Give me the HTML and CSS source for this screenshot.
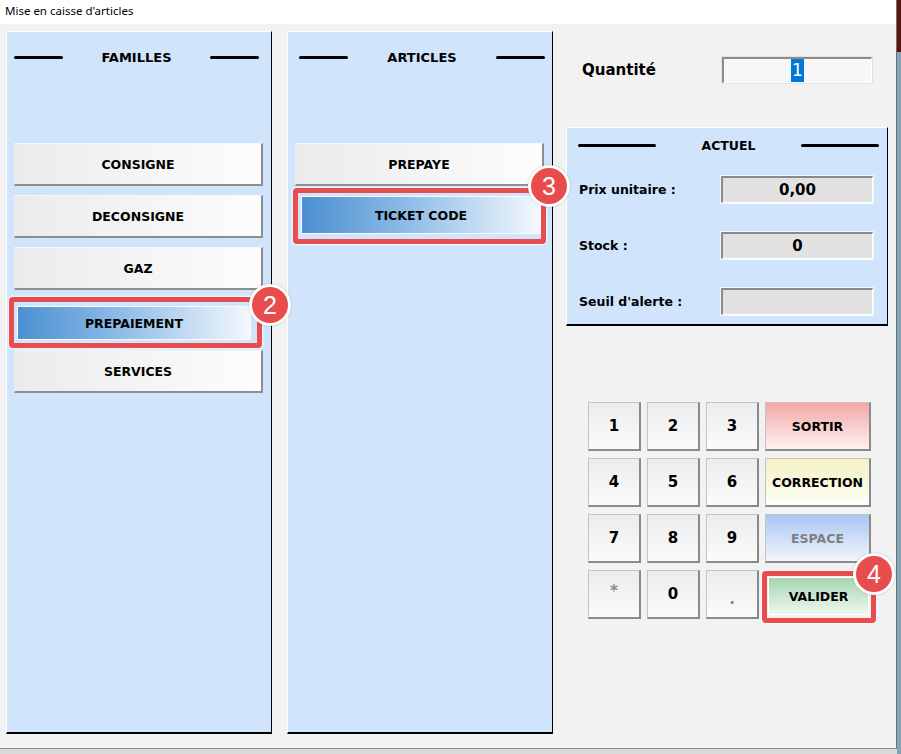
FILE: index.html
```html
<!DOCTYPE html>
<html lang="fr">
<head>
    <meta charset="UTF-8">
    <meta name="viewport" content="width=device-width, initial-scale=1.0">
    <title>Mise en caisse d'articles</title>
    <link rel="stylesheet" href="styles.css">
</head>
<body>
    <div class="window">
        <div class="titlebar">Mise en caisse d'articles</div>
        <div class="content">
            <div class="panel">
                <div class="panel-head">
                    <span class="rule"></span>
                    <span class="panel-title">FAMILLES</span>
                    <span class="rule"></span>
                </div>
                <div class="list">
                    <div class="btn">CONSIGNE</div>
                    <div class="btn">DECONSIGNE</div>
                    <div class="btn">GAZ</div>
                    <div class="highlight highlight-famille">
                        <div class="btn-selected">PREPAIEMENT</div>
                        <span class="badge badge-2">2</span>
                    </div>
                    <div class="btn">SERVICES</div>
                </div>
            </div>

            <div class="panel panel-articles">
                <div class="panel-head">
                    <span class="rule"></span>
                    <span class="panel-title">ARTICLES</span>
                    <span class="rule"></span>
                </div>
                <div class="list">
                    <div class="btn">PREPAYE</div>
                    <div class="highlight highlight-article">
                        <div class="btn-selected">TICKET CODE</div>
                        <span class="badge badge-3">3</span>
                    </div>
                </div>
            </div>

            <div class="side">
                <div class="qty-row">
                    <label class="qty-label">Quantité</label>
                    <div class="qty-input"><span class="selected-text">1</span></div>
                </div>

                <div class="actuel">
                    <div class="panel-head">
                        <span class="rule rule-long"></span>
                        <span class="panel-title">ACTUEL</span>
                        <span class="rule rule-long"></span>
                    </div>
                    <div class="fields">
                        <div class="field-row">
                            <span class="field-label">Prix unitaire :</span>
                            <div class="field">0,00</div>
                        </div>
                        <div class="field-row">
                            <span class="field-label">Stock :</span>
                            <div class="field">0</div>
                        </div>
                        <div class="field-row">
                            <span class="field-label">Seuil d'alerte :</span>
                            <div class="field"></div>
                        </div>
                    </div>
                </div>

                <div class="keypad">
                    <div class="key">1</div>
                    <div class="key">2</div>
                    <div class="key">3</div>
                    <div class="key key-wide key-sortir">SORTIR</div>
                    <div class="key">4</div>
                    <div class="key">5</div>
                    <div class="key">6</div>
                    <div class="key key-wide key-correction">CORRECTION</div>
                    <div class="key">7</div>
                    <div class="key">8</div>
                    <div class="key">9</div>
                    <div class="key key-wide key-espace">ESPACE</div>
                    <div class="key key-dim key-star">*</div>
                    <div class="key">0</div>
                    <div class="key key-dim key-dot">.</div>
                    <div class="highlight highlight-valider">
                        <div class="key key-wide key-valider">VALIDER</div>
                        <span class="badge badge-4">4</span>
                    </div>
                </div>
            </div>
        </div>
    </div>
</body>
</html>
```

FILE: styles.css
```css
body {
    margin: 0;
    width: 901px;
    height: 754px;
    overflow: hidden;
    font-family: "DejaVu Sans", Verdana, sans-serif;
    color: #000;
    background:
        linear-gradient(#5a1313, #5a1313) right top / 4px 52px no-repeat,
        linear-gradient(#88a3b8, #88a3b8) right top / 4px 100% no-repeat,
        #d9d9d9;
}
.window {
    width: 896px;
    height: 748px;
    background: #f2f2f2;
    border-right: 1px solid #6f6f6f;
    border-bottom: 1px solid #8a8a8a;
}
.titlebar {
    height: 24px;
    background: #fff;
    padding-left: 5px;
    font-family: "Noto Sans", sans-serif;
    font-size: 11.5px;
    line-height: 22px;
}
.content {
    display: flex;
    padding: 7px 0 0 6px;
}

/* colonnes familles / articles */
.panel {
    width: 266px;
    height: 703px;
    box-sizing: border-box;
    background: #d0e5fb;
    border-top: 1px solid #fff;
    border-left: 1px solid #fff;
    border-right: 1px solid #000;
    border-bottom: 2px solid #000;
    margin-right: 15px;
}
.panel-articles {
    margin-right: 13px;
}
.panel-head {
    display: flex;
    align-items: center;
    justify-content: space-between;
    height: 51px;
    padding: 0 12px 0 7px;
}
.panel-articles .panel-head {
    padding: 0 7px 0 11px;
}
.rule {
    width: 49px;
    height: 3px;
    border-radius: 2px;
    background: #000;
}
.rule-long {
    width: 78px;
}
.panel-title {
    font-weight: bold;
    font-size: 13px;
}
.list {
    display: flex;
    flex-direction: column;
    gap: 9px;
    margin-top: 60px;
    padding: 0 8px 0 7px;
}
.btn {
    height: 43px;
    box-sizing: border-box;
    display: flex;
    align-items: center;
    justify-content: center;
    font-weight: bold;
    font-size: 12.5px;
    background: linear-gradient(to right, #ebebeb, #fdfdfd);
    border-style: solid;
    border-width: 1px 2px 2px 1px;
    border-color: #f6f6f6 #8e8e8e #8e8e8e #ececec;
}
.btn-selected {
    height: 100%;
    display: flex;
    align-items: center;
    justify-content: center;
    font-weight: bold;
    font-size: 12.5px;
    background: linear-gradient(to right, #4b8fd1, #8fbde7 45%, #f4f8fd);
    box-shadow: 0 0 0 1px rgba(255, 255, 255, 0.85);
}

/* encadrés rouges + pastilles */
.highlight {
    position: relative;
    box-sizing: border-box;
    border: 5px solid #e84c4c;
    border-radius: 4px;
    box-shadow: 0 0 2px 1px rgba(255, 255, 255, 0.9);
}
.highlight-famille {
    height: 51px;
    margin: -2px 1px -7px -5px;
    padding: 5px 7px 4px 4px;
}
.highlight-article {
    height: 56px;
    margin: -7px -2px 0 -2px;
    padding: 4px 1px 6px 4px;
}
.highlight-valider {
    margin: 1px -5px -4px -3px;
    padding: 2px 3px 4px 2px;
}
.badge {
    position: absolute;
    z-index: 5;
    width: 36px;
    height: 36px;
    border: 3px solid #fff;
    border-radius: 50%;
    background: #e84c4c;
    color: #fff;
    font-family: "Liberation Sans", Arial, sans-serif;
    font-size: 25px;
    line-height: 36px;
    text-align: center;
    box-shadow: 0 0 2px rgba(0, 0, 0, 0.25);
}
.badge-2 {
    right: -34px;
    top: -18px;
}
.badge-3 {
    right: -29px;
    top: -28px;
}
.badge-4 {
    right: -24px;
    top: -23px;
}

/* partie droite */
.side {
    width: 322px;
    display: flex;
    flex-direction: column;
}
.qty-row {
    display: flex;
    align-items: center;
    margin-top: 26px;
    padding-left: 16px;
}
.qty-label {
    width: 140px;
    font-weight: bold;
    font-size: 15px;
}
.qty-input {
    width: 150px;
    height: 26px;
    box-sizing: border-box;
    display: flex;
    align-items: center;
    justify-content: center;
    background: #f7f7f7;
    border-style: solid;
    border-width: 2px 1px 1px 2px;
    border-color: #8c8c8c #fff #fff #8c8c8c;
    box-shadow: 0 0 0 1px #e2e2e2;
}
.selected-text {
    background: #0078d7;
    color: #fff;
    font-size: 17px;
    line-height: 23px;
    padding: 0 1px;
}
.actuel {
    margin-top: 44px;
    height: 199px;
    box-sizing: border-box;
    background: #d0e5fb;
    border-top: 1px solid #fff;
    border-left: 1px solid #fff;
    border-right: 1px solid #000;
    border-bottom: 2px solid #000;
}
.actuel .panel-head {
    height: 35px;
    padding: 0 8px 0 11px;
}
.actuel .panel-title {
    font-size: 12.5px;
}
.fields {
    display: flex;
    flex-direction: column;
    gap: 29px;
    margin-top: 13px;
    padding: 0 14px 0 12px;
}
.field-row {
    display: flex;
    align-items: center;
    justify-content: space-between;
}
.field-label {
    font-weight: bold;
    font-size: 12.5px;
}
.field {
    width: 152px;
    height: 27px;
    box-sizing: border-box;
    display: flex;
    align-items: center;
    justify-content: center;
    background: #e2e2e2;
    border-style: solid;
    border-width: 2px 1px 1px 2px;
    border-color: #8a8a8a #fff #fff #8a8a8a;
    box-shadow: 0 0 0 1px #f4f7fb;
    font-weight: bold;
    font-size: 15px;
}

/* pavé numérique */
.keypad {
    display: grid;
    grid-template-columns: 53px 53px 53px 106px;
    grid-auto-rows: 49px;
    gap: 7px 6px;
    margin: 76px 0 0 22px;
}
.key {
    box-sizing: border-box;
    display: flex;
    align-items: center;
    justify-content: center;
    font-weight: bold;
    font-size: 15px;
    background: linear-gradient(#ececec, #fbfbfb);
    border-style: solid;
    border-width: 1px 2px 2px 1px;
    border-color: #c4c4c4 #8a8a8a #8a8a8a #c4c4c4;
}
.key-wide {
    font-size: 12.5px;
}
.key-sortir {
    background: linear-gradient(#f3a7a7, #fdf1f1);
}
.key-correction {
    background: linear-gradient(#f4f1c4, #fefef6);
}
.key-espace {
    background: linear-gradient(#a9c5f1, #f2f6fd);
    color: #7f7f7f;
}
.key-dim {
    color: #8a8a8a;
}
.key-star {
    padding-bottom: 6px;
}
.key-dot {
    padding-top: 10px;
}
.key-valider {
    height: 100%;
    border: none;
    background: linear-gradient(#a5d6ae, #eef8f0);
    box-shadow: 0 0 0 1px #fff;
}
```
